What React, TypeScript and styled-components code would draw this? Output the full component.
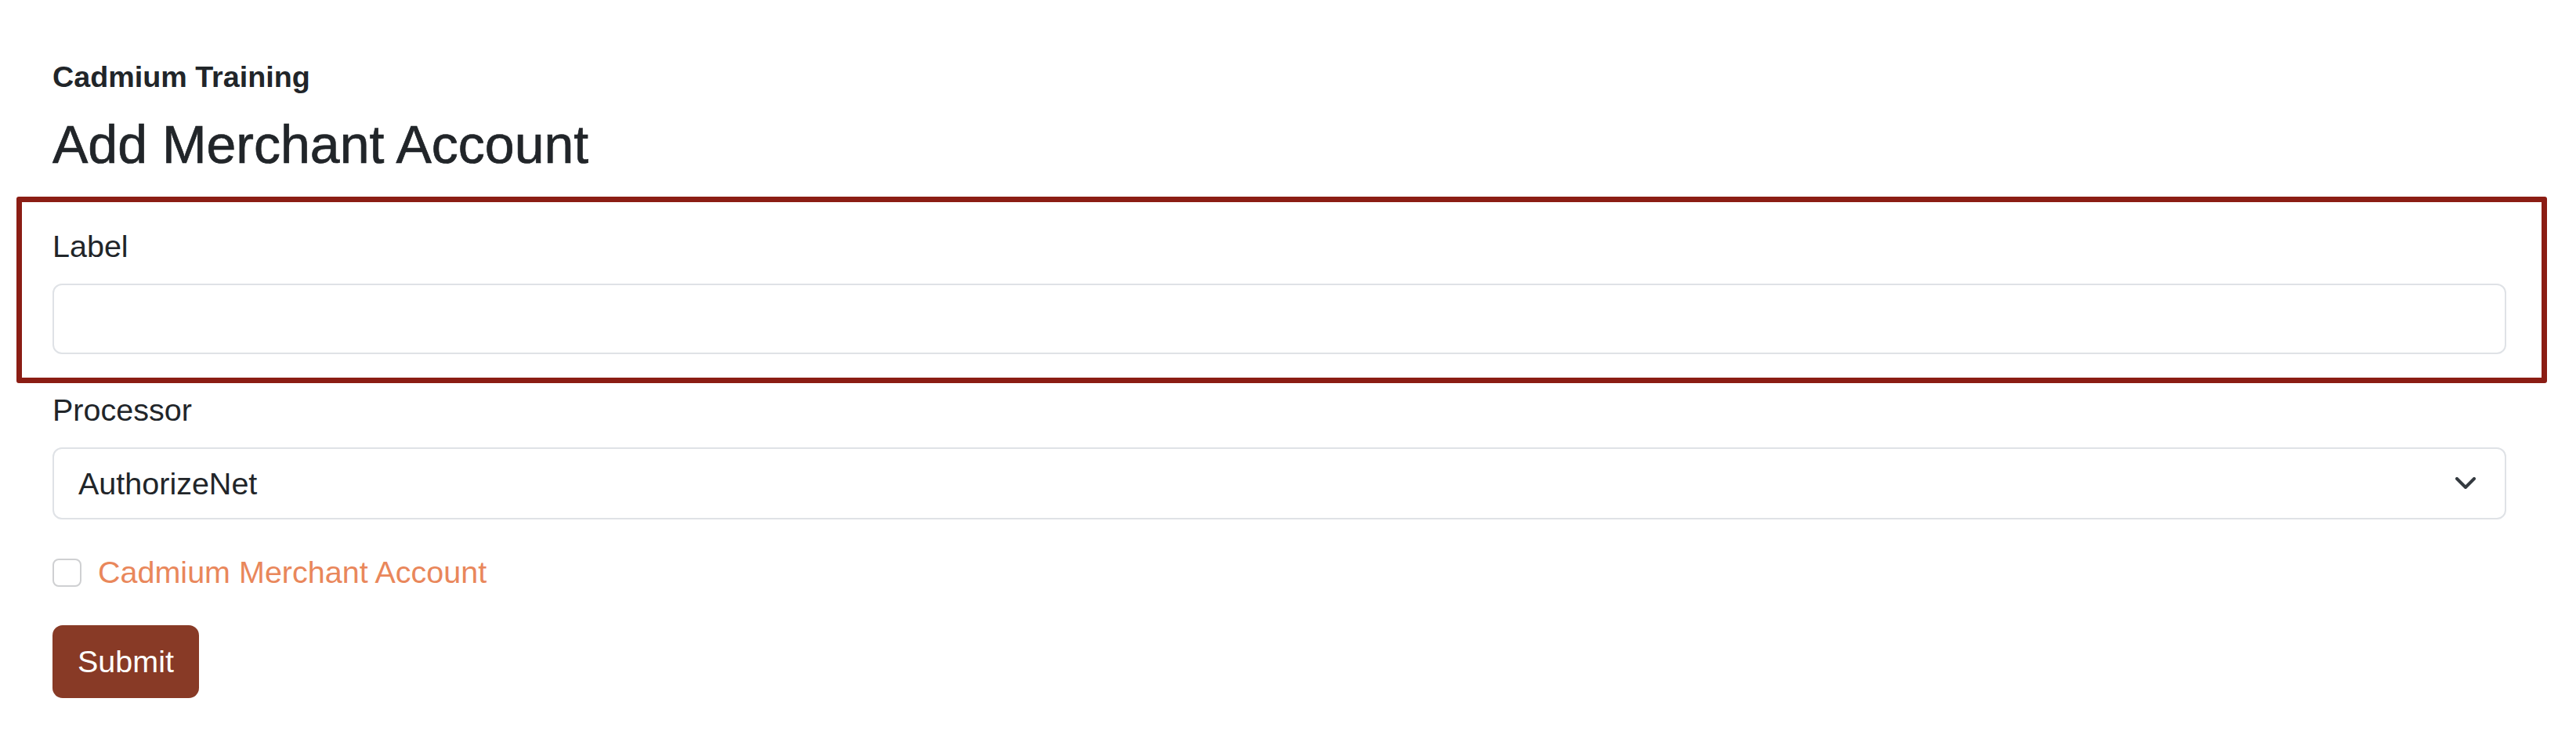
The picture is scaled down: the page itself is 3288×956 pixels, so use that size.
import React from 'react'
import styled, { createGlobalStyle } from 'styled-components'

const GlobalStyle = createGlobalStyle`
  html, body {
    margin: 0;
    padding: 0;
    background: #ffffff;
  }
  body {
    font-family: "Liberation Sans", Arial, Helvetica, sans-serif;
    color: #212529;
  }
  * {
    box-sizing: border-box;
  }
`

const Page = styled.div`
  display: flex;
  flex-direction: column;
  padding: 76px 89px 40px 67px;
`

const OrgName = styled.div`
  font-size: 37.7px;
  font-weight: 700;
  line-height: 1.2;
  margin: 0 0 23px;
`

const Title = styled.h3`
  font-size: 68px;
  font-weight: 500;
  line-height: 1.2;
  margin: 0 0 25px;
  -webkit-text-stroke: 0.7px #212529;
`

const Form = styled.form`
  display: flex;
  flex-direction: column;
`

const Highlight = styled.div`
  margin: 0 -52px 0 -46px;
  border: 7px solid #8b1d14;
  border-radius: 3px;
  padding: 27px 45px 30px 39px;
`

const Field = styled.div<{ $top?: number }>`
  display: flex;
  flex-direction: column;
  margin-top: ${(p) => p.$top ?? 0}px;
`

const FieldLabel = styled.label`
  font-size: 39.5px;
  line-height: 1.5;
  margin-bottom: 18px;
`

const TextInput = styled.input`
  display: block;
  width: 100%;
  height: 90px;
  padding: 0 31px;
  font-family: inherit;
  font-size: 39.5px;
  color: #212529;
  background: #ffffff;
  border: 2px solid #dfe2e6;
  border-radius: 12px;
  outline: none;
`

const SelectBox = styled.div`
  display: flex;
  align-items: center;
  justify-content: space-between;
  height: 92px;
  padding: 0 37px 0 31px;
  border: 2px solid #dfe2e6;
  border-radius: 12px;
  font-size: 39.5px;
  line-height: 1.5;
  color: #212529;
`

const CheckRow = styled.label`
  display: flex;
  align-items: center;
  gap: 21px;
  margin-top: 38px;
  font-size: 39.5px;
  line-height: 1.5;
  color: #e9875b;
`

const CheckBox = styled.input`
  appearance: none;
  margin: 0;
  width: 37px;
  height: 36px;
  border: 2px solid #cfd0d2;
  border-radius: 8px;
  background: #ffffff;
`

const SubmitButton = styled.button`
  align-self: flex-start;
  margin-top: 37px;
  padding: 17px 32px;
  font-family: inherit;
  font-size: 39.5px;
  line-height: 1.5;
  color: #ffffff;
  background: #883a26;
  border: none;
  border-radius: 13px;
`

const Chevron = () => (
  <svg width="26" height="16" viewBox="0 0 26 16" fill="none">
    <path d="M2 2l11 11L24 2" stroke="#343a40" strokeWidth="4" strokeLinecap="round" strokeLinejoin="round" />
  </svg>
)

export default function App() {
  return (
    <>
      <GlobalStyle />
      <Page>
        <OrgName>Cadmium Training</OrgName>
        <Title>Add Merchant Account</Title>
        <Form onSubmit={(e) => e.preventDefault()}>
          <Highlight>
            <Field>
              <FieldLabel htmlFor="label">Label</FieldLabel>
              <TextInput id="label" type="text" />
            </Field>
          </Highlight>
          <Field $top={5}>
            <FieldLabel>Processor</FieldLabel>
            <SelectBox>
              <span>AuthorizeNet</span>
              <Chevron />
            </SelectBox>
          </Field>
          <CheckRow>
            <CheckBox type="checkbox" />
            Cadmium Merchant Account
          </CheckRow>
          <SubmitButton type="submit">Submit</SubmitButton>
        </Form>
      </Page>
    </>
  )
}
